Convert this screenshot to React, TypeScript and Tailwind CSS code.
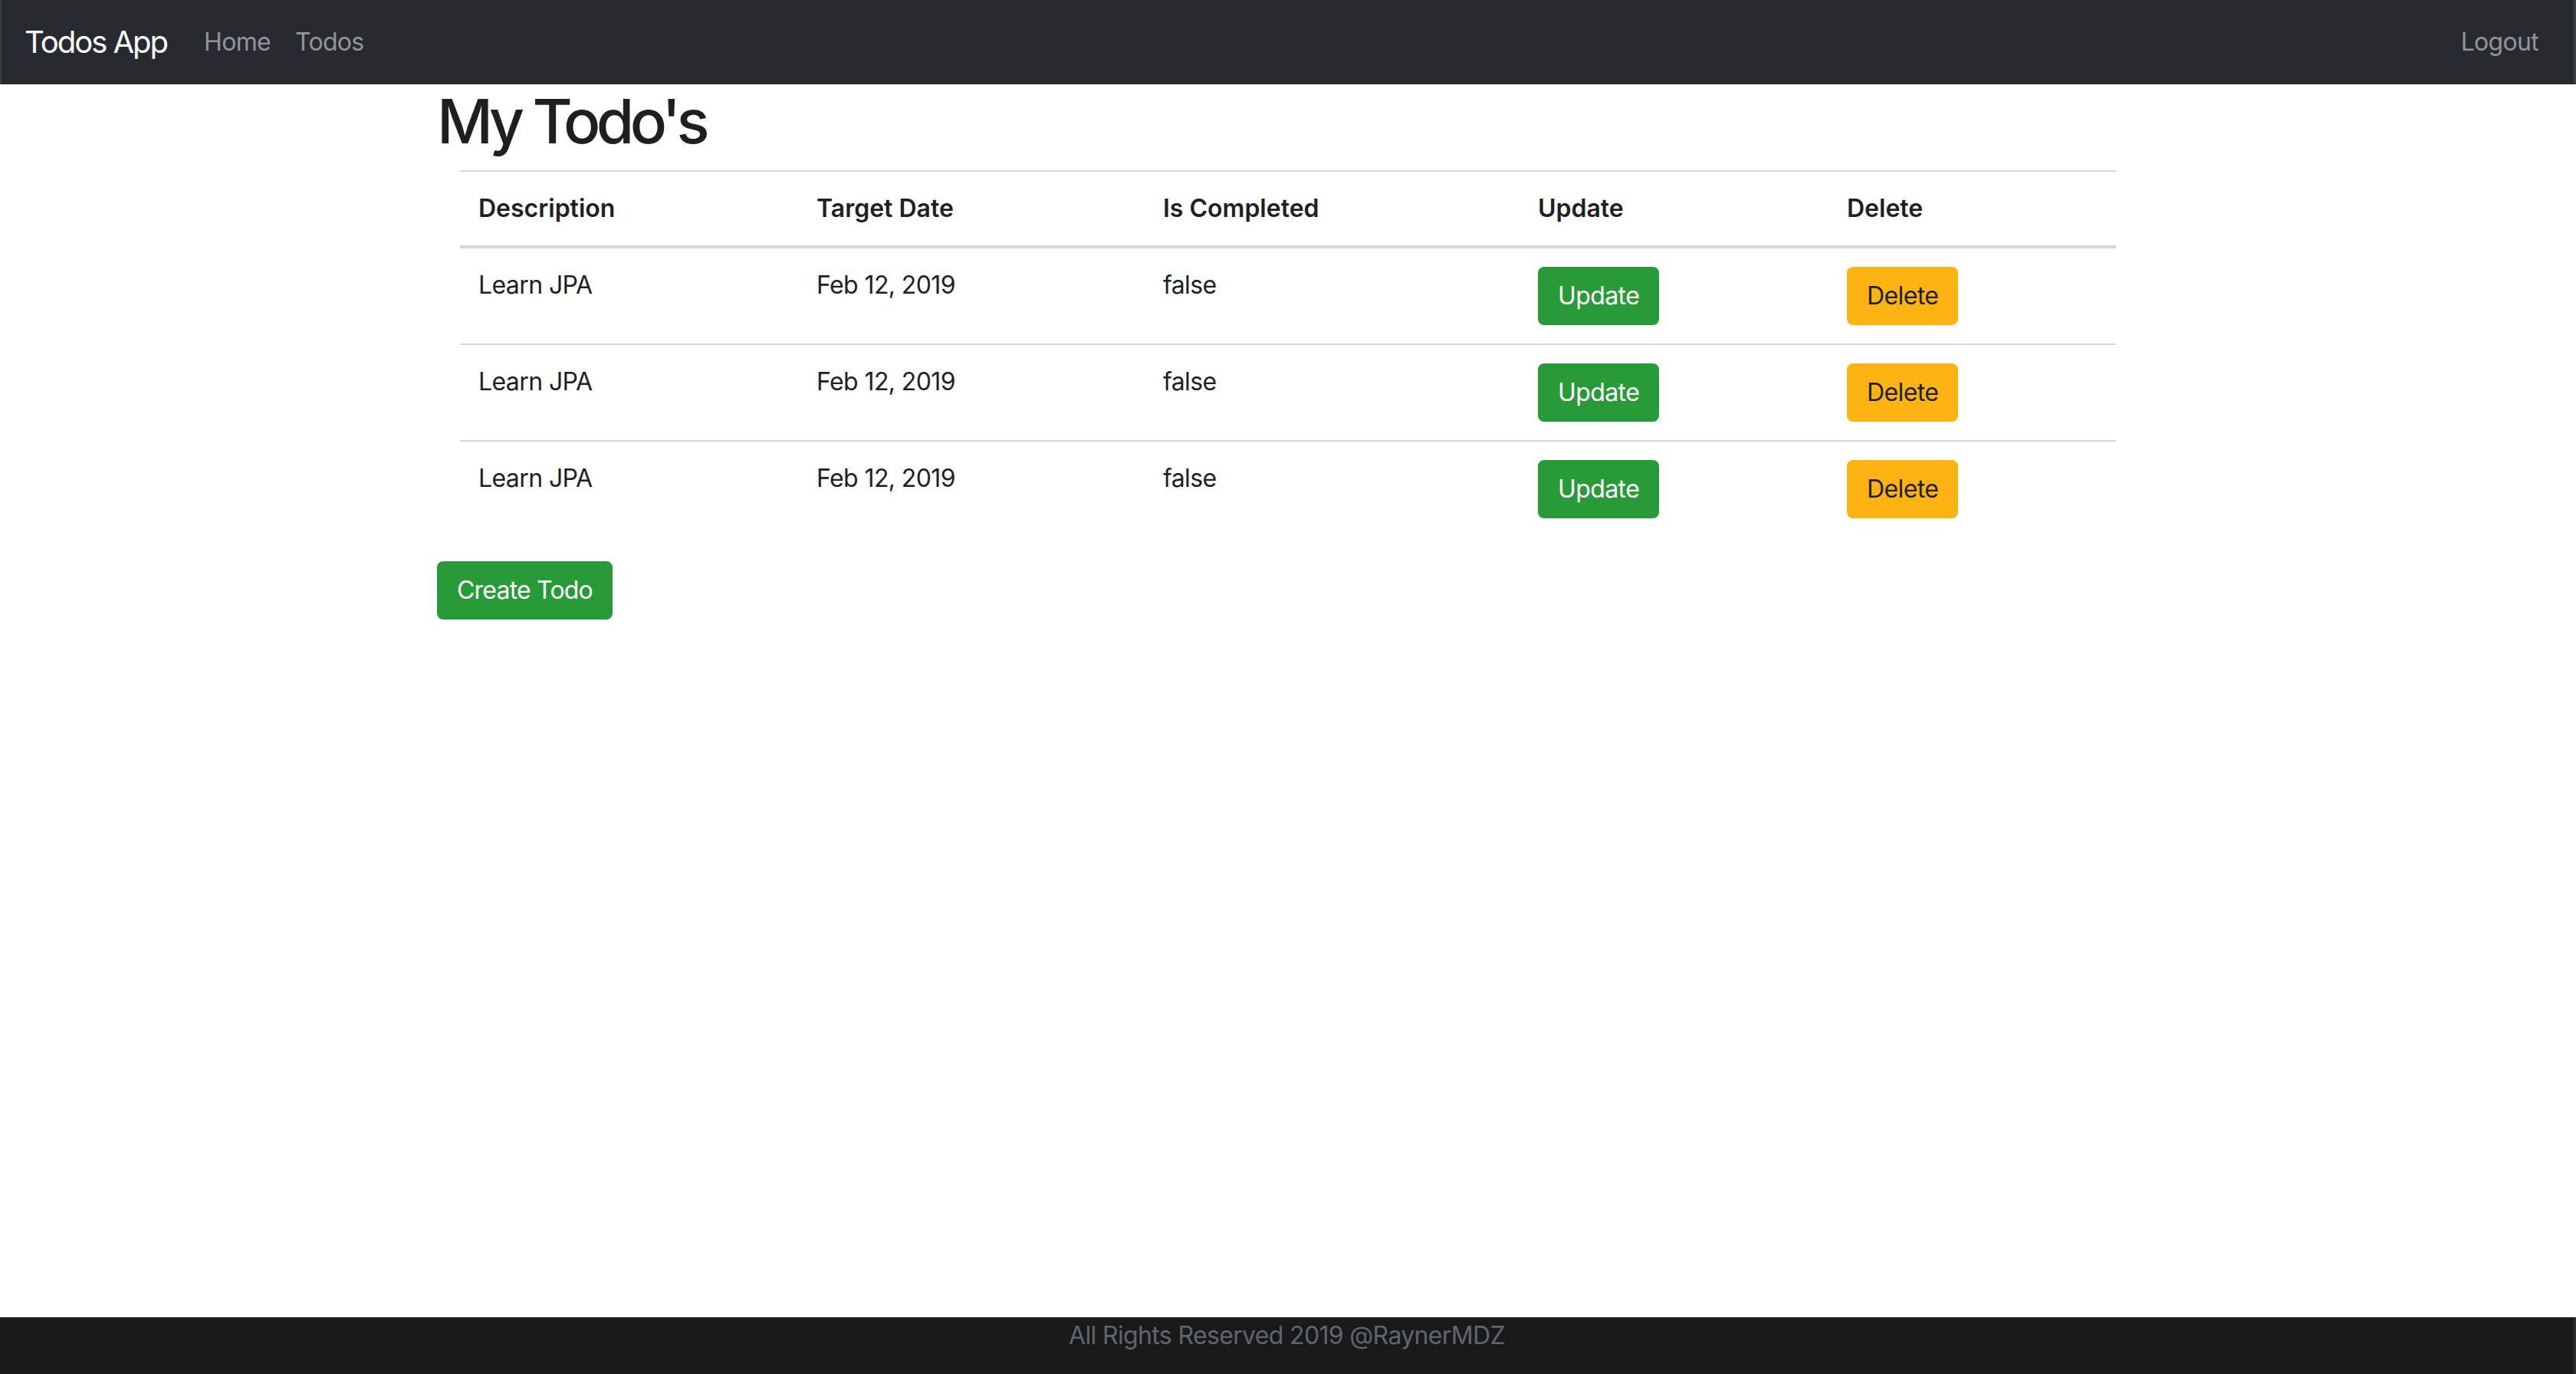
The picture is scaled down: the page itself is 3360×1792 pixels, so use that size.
import React from "react";

const rows = [
  { description: "Learn JPA", date: "Feb 12, 2019", done: "false" },
  { description: "Learn JPA", date: "Feb 12, 2019", done: "false" },
  { description: "Learn JPA", date: "Feb 12, 2019", done: "false" },
];

export default function App() {
  return (
    <div
      className="flex h-[1792px] flex-col bg-white text-[#1d1f22]"
      style={{ fontFamily: "Inter, 'Liberation Sans', sans-serif" }}
    >
      <nav className="flex h-[110px] shrink-0 items-center border-l-2 border-r-[3px] border-[#3a3f45] bg-[#272b30] px-[30px]">
        <span className="mr-8 text-[40px] leading-[60px] tracking-[-2px] text-white">Todos App</span>
        <a className="px-4 text-[32px] leading-[48px] tracking-[-0.7px] text-[#939598]">Home</a>
        <a className="px-4 text-[32px] leading-[48px] tracking-[-0.7px] text-[#939598]">Todos</a>
        <a className="ml-auto px-4 text-[32px] leading-[48px] tracking-[-0.7px] text-[#939598]">Logout</a>
      </nav>

      <main className="mx-auto w-[2280px] px-[30px]">
        <h1 className="mb-4 text-[80px] font-medium leading-[96px] tracking-[-5.5px]">My Todo's</h1>
        <div className="px-[30px]">
          <table className="mb-8 w-full border-collapse text-[32px] leading-[48px]">
            <thead>
              <tr>
                <th className="w-[441px] border-b-4 border-t-2 border-[#d6d9dc] p-6 text-left font-semibold">Description</th>
                <th className="w-[452px] border-b-4 border-t-2 border-[#d6d9dc] p-6 text-left font-semibold">Target Date</th>
                <th className="w-[489px] border-b-4 border-t-2 border-[#d6d9dc] p-6 text-left font-semibold">Is Completed</th>
                <th className="w-[403px] border-b-4 border-t-2 border-[#d6d9dc] p-6 text-left font-semibold">Update</th>
                <th className="border-b-4 border-t-2 border-[#d6d9dc] p-6 text-left font-semibold">Delete</th>
              </tr>
            </thead>
            <tbody className="tracking-[-0.6px]">
              {rows.map((r, i) => (
                <tr key={i}>
                  <td className={`${i === 0 ? "" : "border-t-2"} border-[#d6d9dc] p-6 align-top`}>{r.description}</td>
                  <td className={`${i === 0 ? "" : "border-t-2"} border-[#d6d9dc] p-6 align-top`}>{r.date}</td>
                  <td className={`${i === 0 ? "" : "border-t-2"} border-[#d6d9dc] p-6 align-top`}>{r.done}</td>
                  <td className={`${i === 0 ? "" : "border-t-2"} border-[#d6d9dc] p-6 align-top`}>
                    <button className="rounded-lg border-2 border-[#289b38] bg-[#289b38] px-6 py-3 text-[32px] leading-[48px] tracking-[-0.6px] text-white">
                      Update
                    </button>
                  </td>
                  <td className={`${i === 0 ? "" : "border-t-2"} border-[#d6d9dc] p-6 align-top`}>
                    <button className="rounded-lg border-2 border-[#fdb412] bg-[#fdb412] px-6 py-3 text-[32px] leading-[48px] tracking-[-0.6px] text-[#1d1f22]">
                      Delete
                    </button>
                  </td>
                </tr>
              ))}
            </tbody>
          </table>
        </div>
        <button className="rounded-lg border-2 border-[#289b38] bg-[#289b38] px-6 py-3 text-[32px] leading-[48px] tracking-[-0.8px] text-white">
          Create Todo
        </button>
      </main>

      <footer className="mt-auto h-[74px] shrink-0 border-r-[3px] border-[#2a2a2a] bg-[#191919] text-center text-[32px] leading-[48px] tracking-[-0.65px] text-[#5f6670]">
        All Rights Reserved 2019 @RaynerMDZ
      </footer>
    </div>
  );
}
